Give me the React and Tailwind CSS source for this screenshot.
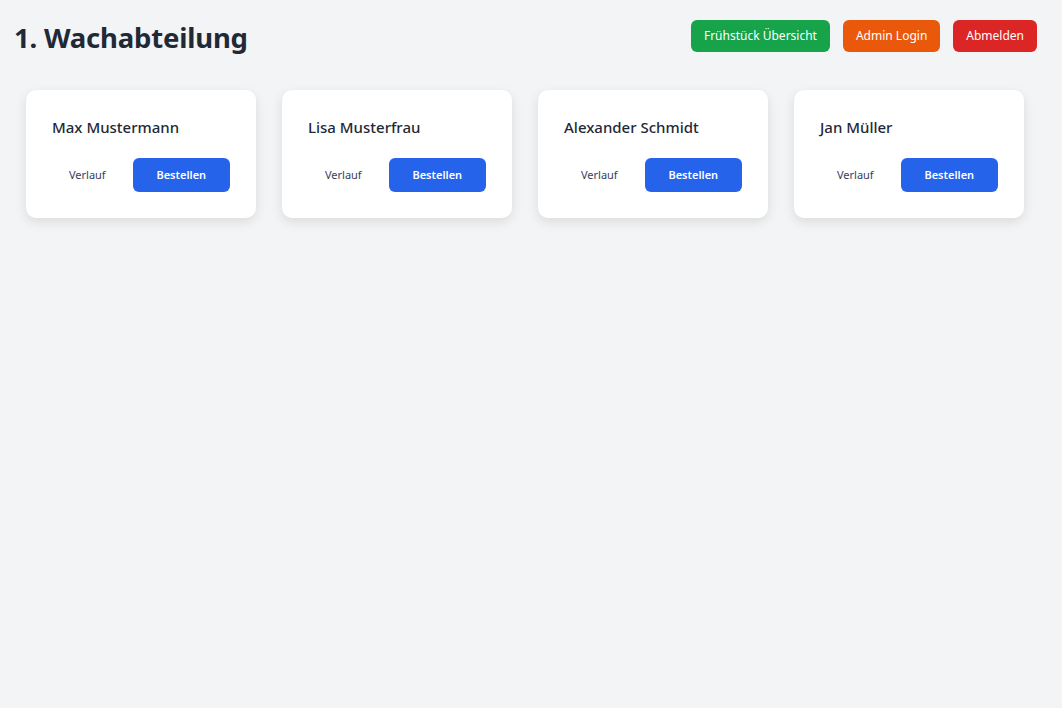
import React from "react";

const people = ["Max Mustermann", "Lisa Musterfrau", "Alexander Schmidt", "Jan Müller"];

export default function App() {
  return (
    <div
      className="min-h-[708px] w-full bg-[#f3f4f6] text-[#1f2937]"
      style={{ fontFamily: '"Noto Sans", "Open Sans", sans-serif' }}
    >
      <div className="flex h-[56px] items-start justify-between pl-[14px] pr-[25px] pt-[16px]">
        <h1 className="mt-[2px] text-[27.5px] font-bold leading-[40px] tracking-[-0.2px]">1. Wachabteilung</h1>
        <div className="mt-[4px] flex items-center gap-[13px]">
          <button className="h-[32px] rounded-[6px] bg-[#16a34a] px-[13px] text-[12px] text-white">Frühstück Übersicht</button>
          <button className="h-[32px] rounded-[6px] bg-[#ea580c] px-[13px] text-[12px] text-white">Admin Login</button>
          <button className="h-[32px] rounded-[6px] bg-[#dc2626] px-[13px] text-[12px] text-white">Abmelden</button>
        </div>
      </div>
      <div className="flex gap-[26px] px-[26px] pt-[34px]">
        {people.map((p) => (
          <div key={p} className="w-[230px] rounded-[10px] bg-white px-[26px] pt-[26px] pb-[26px] shadow-[0_4px_12px_rgba(0,0,0,0.1)]">
            <div className="text-[15px] font-medium leading-[22px]">{p}</div>
            <div className="mt-[20px] flex items-center gap-[10px]">
              <button className="h-[34px] w-[71px] text-[11px] text-[#374151]">Verlauf</button>
              <button className="h-[34px] w-[98px] rounded-[6px] bg-[#2563eb] text-[11px] font-semibold text-white">Bestellen</button>
            </div>
          </div>
        ))}
      </div>
    </div>
  );
}
